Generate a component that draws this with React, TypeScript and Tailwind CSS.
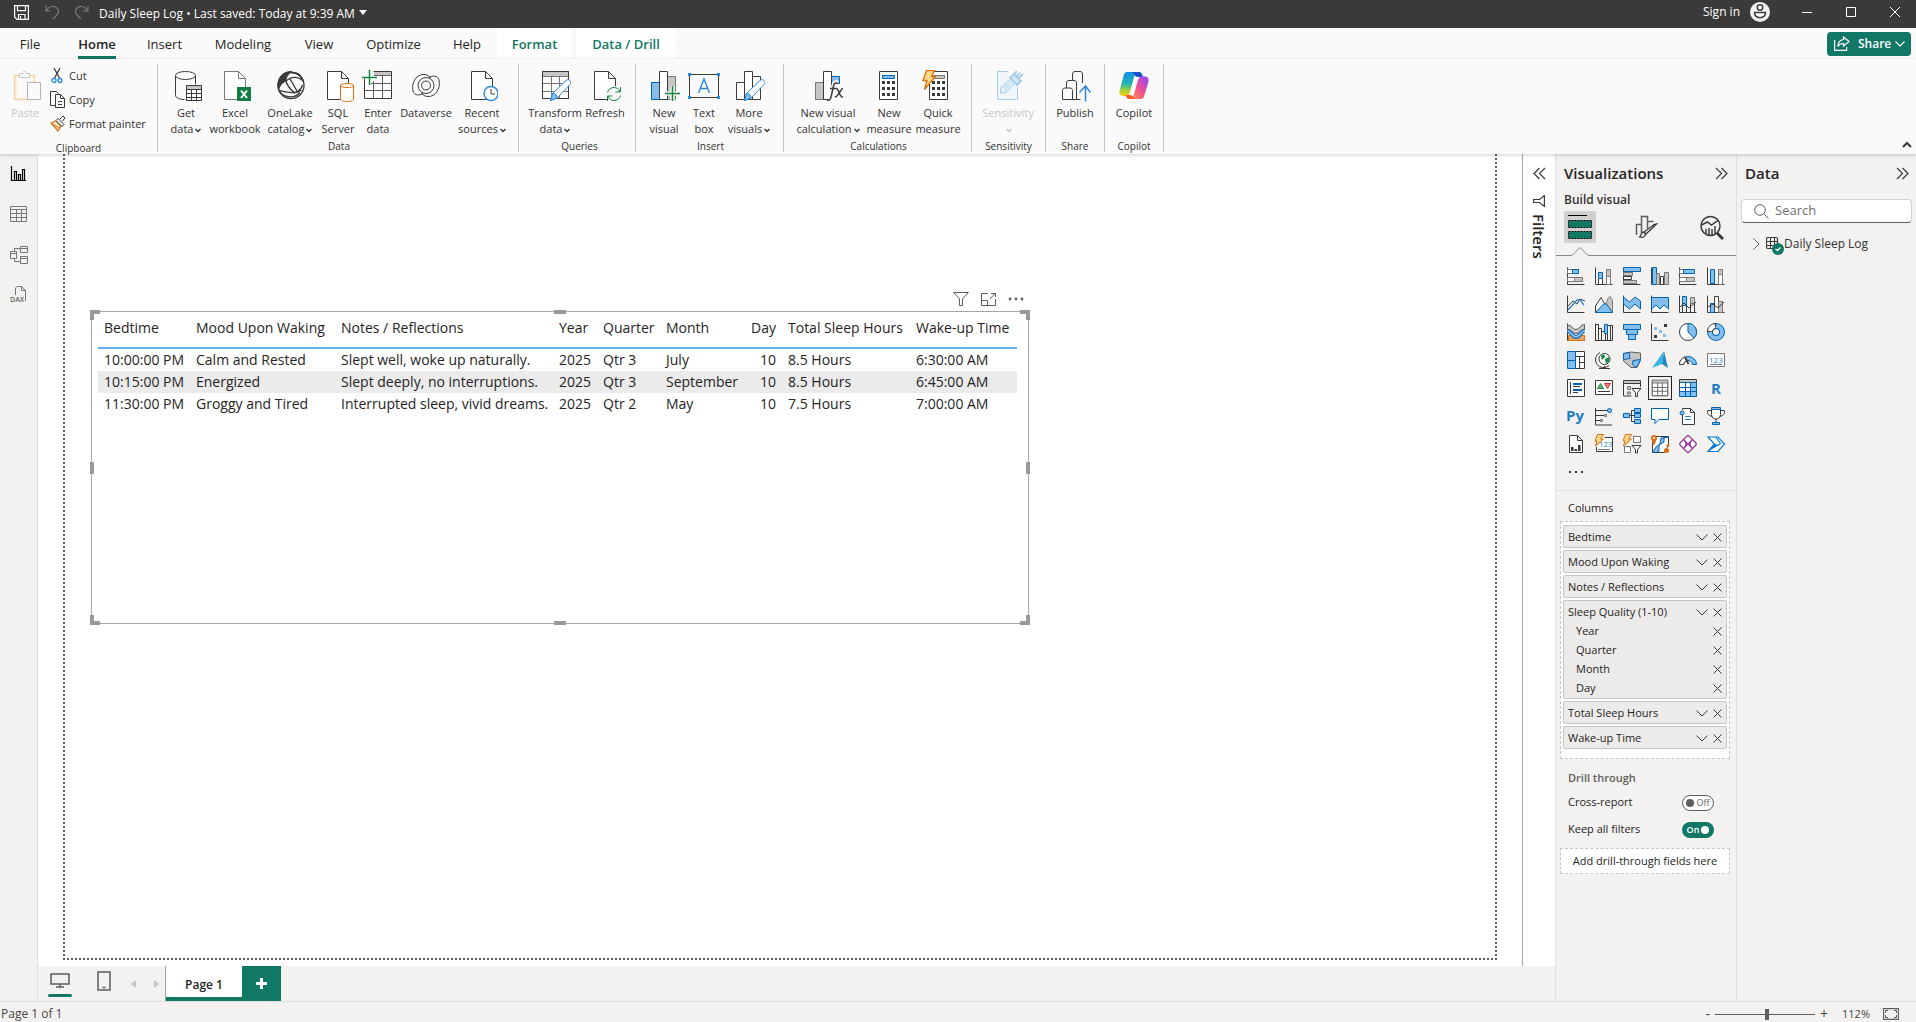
import type { ReactNode } from 'react';

const INK = '#3b3a39';
const BLUE = '#83beec';
const EDGE = '#0063b1';
const SKY = '#2b88d8';
const GRAY = '#c8c6c4';
const GREEN = '#117865';

/* ================= RIBBON ICONS ================= */

function RibbonIcon({ children }: { children: ReactNode }) {
  return (
    <svg width="32" height="32" viewBox="0 0 32 32" fill="none" stroke={INK} className="shrink-0">
      {children}
    </svg>
  );
}

function Doc({ stroke = INK }: { stroke?: string }) {
  return <path d="M5.5 1.5h14l7 7v21h-21zM19.5 1.5v7h7" fill="#fff" stroke={stroke} />;
}

function Pencil() {
  return (
    <g stroke={SKY}>
      <path d="M11.5 30.5l2-7L27 10.5c1.5-1.4 3-1 4 0s1.3 2.5 0 4L18 28z" fill="#fff" />
      <path d="M11.5 30.5l2-7c3 0 4.5 2 4.5 4.5z" fill={BLUE} />
    </g>
  );
}

function Grid() {
  return (
    <>
      <path d="M3.5 1.5h26v27h-26z" fill="#fff" />
      <path d="M4 2h25v4H4z" fill={GRAY} stroke="none" />
      <path d="M3.5 6.500h26M3.500 13.500h26M3.500 21.500h26M12.500 6.500v22M20.500 6.500v22" stroke="#797775" />
      <path d="M3.5 1.5h26v27h-26z" />
    </>
  );
}

function Calculator({ display }: { display: string }) {
  return (
    <>
      <path d="M6.5 1.5h18v28h-18z" fill="#fff" />
      <path d="M9.5 5.5h12v3h-12z" fill={display} stroke={display === BLUE ? EDGE : '#797775'} />
      {[11, 17, 23].map((y) =>
        [9, 14, 19].map((x) => <rect key={`${x}-${y}`} x={x} y={y} width="3" height="3" fill={INK} stroke="none" />),
      )}
    </>
  );
}

const ribbonIcons: Record<string, ReactNode> = {
  getData: (
    <>
      <path d="M5.5 5.5v20c0 2 4 4 9 4M25.5 5.5v9" />
      <ellipse cx="15.5" cy="5.5" rx="10" ry="4" fill="#fff" />
      <path d="M16.5 15.5h15v15h-15z" fill="#fff" />
      <path d="M17 16h14v3H17z" fill={GRAY} stroke="none" />
      <path d="M16.5 19.5h15M16.5 23.5h15M16.5 27.5h15M21.5 19.5v11M26.5 19.5v11" />
      <path d="M16.5 15.5h15v15h-15z" />
    </>
  ),
  excel: (
    <>
      <Doc stroke="#797775" />
      <path d="M18 17h14v14H18z" fill="#107c41" stroke="none" />
      <path d="M22 20.5l6 7.5M28 20.5l-6 7.5" stroke="#fff" strokeWidth="2" />
    </>
  ),
  oneLake: (
    <>
      <circle cx="17" cy="15.5" r="13" strokeWidth="1.3" />
      <path d="M18 1.5C8 1 2 9 4.5 20c2-6 5-8 7.500-9 0-4 2-7 6-9.500z" fill={INK} />
      <path d="M18 2.500c6 0 10 4 11.500 9-4-5-12-6-17.500-.5 1 5 4 8 8.500 12 3-1 7-4 8-8" strokeWidth="1.3" />
      <path d="M4.5 20c2 1 12 3 16 2.500 3 0 5-1 7-2.500M5 20.500c4 7 15 9 21 2M16 9l7 12" strokeWidth="1.3" />
    </>
  ),
  sql: (
    <>
      <Doc />
      <path d="M18.5 15v14c0 1.5 3 2.5 6.5 2.5s6.5-1 6.5-2.5V15" fill="#fff" stroke="#d8700d" />
      <ellipse cx="25" cy="15.5" rx="6.5" ry="2" fill="#fff" stroke="#d8700d" />
    </>
  ),
  enter: (
    <>
      <path d="M2.5 8.5v20h27v-27h-18" fill="#fff" />
      <path d="M12 2h17v3H12z" fill={GRAY} stroke="none" />
      <path d="M12 5.5h17.5M9 13.5h20.5M3 20.5h26.5M11.5 11v18M20.5 5.5v23" stroke="#605e5c" />
      <path d="M7.5 0v15M0 7.5h15" stroke="#10893e" strokeWidth="1.5" />
    </>
  ),
  dataverse: (
    <>
      <path d="M14 4.500C7 4 1 12 3 21c1.200 5 7 4.500 10 2.500M18 26.500C25 27 31 19 29 10c-1.200-5-7-4.500-10-2.500" />
      <path d="M14 4.500c3 0 5 1.500 7 3.500M18 26.500c-3 0-5-1.500-7-3.500" />
      <circle cx="16" cy="15.5" r="8" />
      <circle cx="16" cy="15.5" r="4.500" />
    </>
  ),
  recent: (
    <>
      <Doc />
      <circle cx="25" cy="23.5" r="7" fill="#fff" stroke={SKY} strokeWidth="1.4" />
      <path d="M25 19v5h4" />
    </>
  ),
  transform: (
    <>
      <Grid />
      <Pencil />
    </>
  ),
  refresh: (
    <>
      <Doc />
      <circle cx="25" cy="24" r="8" fill="#fafafa" stroke="none" />
      <path
        d="M18.5 22.5c1-3.5 3.5-5 6.5-5 2.500 0 5 1.500 6 4.500M31.500 17v5h-5M31.500 25.500c-1 3.500-3.500 5-6.500 5-2.500 0-5-1.500-6-4.500M18.500 31v-5h5"
        stroke="#10893e"
      />
    </>
  ),
  newVisual: (
    <>
      <path d="M3.5 12.5h8v17h-8z" fill={BLUE} stroke={EDGE} />
      <path d="M19.5 6.5h8v23h-8z" fill={GRAY} stroke="#797775" />
      <path d="M11.5 1.5h8v28h-8z" fill="#fff" />
      <path d="M24.5 16v15M17 23.5h15" stroke="#fafafa" strokeWidth="4" />
      <path d="M24.5 16v15M17 23.5h15" stroke="#10893e" strokeWidth="1.5" />
    </>
  ),
  textBox: (
    <>
      <path d="M1.5 4.5h29v23h-29z" fill="#fafafa" />
      <path d="M0 3h3v3H0zM29 3h3v3h-3zM0 26h3v3H0zM29 26h3v3h-3z" fill={SKY} stroke="none" />
      <path d="M10.5 23L16 9l5.500 14M12.500 18.500h7" stroke={SKY} strokeWidth="1.4" />
    </>
  ),
  moreVisuals: (
    <>
      <path d="M3.5 12.5h8v17h-8zM19.5 6.5h8v23h-8zM11.5 1.5h8v28h-8z" fill="#fff" />
      <Pencil />
    </>
  ),
  calculation: (
    <>
      <path d="M3.5 12.5h8v17h-8z" fill={GRAY} stroke="#797775" />
      <path d="M19.5 6.5h8v7h-8z" fill={BLUE} stroke={EDGE} />
      <path d="M11.5 1.5h8v28h-8z" fill="#fff" />
      <path d="M16 30c3 0 3.500-3 4-6l2-9c.5-2 2-2.500 4-2" stroke="#fafafa" strokeWidth="5" />
      <path
        d="M15 30c3 1 4-2 4.500-5l2-9c.5-3 2.500-3.500 4.500-2.500M18 18.500h6M24 18.500c3-1 3 9 7 8.500M31 18.500c-2 0-5 8.500-8 8.500"
        strokeWidth="1.5"
      />
    </>
  ),
  measure: <Calculator display={BLUE} />,
  quick: (
    <>
      <g transform="translate(1 0)">
        <Calculator display={GRAY} />
      </g>
      <path d="M4.5.5h8l-3 6h4l-11 13 2.500-9H1z" fill="#fbd989" stroke="#d8700d" strokeWidth="1.3" />
    </>
  ),
  sensitivity: (
    <g stroke="#a5cde8">
      <path d="M16 1.5H5.5v28h20V17" fill="#f0f6fa" />
      <path d="M8.5 18l8-8 5 5-8 8h-5zM11 18l6-5M13 20l5-5" fill="#e3f1fa" />
      <path d="M18 8l4-4 7 7-4 4zM22 4l3-3M27 8l4-4M25 6l3-3" fill="#d3e8f6" strokeWidth="2" />
    </g>
  ),
  publish: (
    <>
      <path d="M13.5 10V4c0-1.500 1-2.500 2.500-2.500h5c1.500 0 2.500 1 2.500 2.500v9" />
      <path d="M7.5 18v-5c0-1.500 1-2.500 2.500-2.500h5c1.500 0 2.500 1 2.500 2.500v16.500" />
      <path d="M3.5 20.500c0-1.500 1-2.500 2.500-2.500h5c1.500 0 2.500 1 2.500 2.500v9h-10zM13.500 29.500h8" />
      <path d="M26.5 31.500v-15M20.500 22.500l6-6.500 5 6.500" stroke={SKY} strokeWidth="1.5" />
    </>
  ),
  copilot: (
    <>
      <defs>
        <linearGradient id="cpA" x1="0" y1="0" x2="0" y2="1">
          <stop offset="0" stopColor="#0f8ee9" />
          <stop offset=".5" stopColor="#27b5b0" />
          <stop offset=".75" stopColor="#9bd13c" />
          <stop offset="1" stopColor="#ffcb0d" />
        </linearGradient>
        <linearGradient id="cpB" x1="1" y1="0" x2="0" y2="1">
          <stop offset="0" stopColor="#8c48ff" />
          <stop offset=".5" stopColor="#ee5091" />
          <stop offset="1" stopColor="#ff9b3f" />
        </linearGradient>
      </defs>
      <path d="M9 2h12c-3 0-4 2-5 5l-4 15c-1 3-2 4-4 4H5c-4 0-4-4-3-7L5.5 6C6.3 3.500 7 2 9 2z" fill="url(#cpA)" stroke="none" />
      <path d="M12 2h9c2 0 3 1.500 4 5h-5c-2 0-3-1-4-3s-2-2-4-2z" fill="#1b4fc9" stroke="none" />
      <path d="M23 29H11c3 0 4-2 5-5l4-14c1-2.500 2-3.500 4-3.500h3c4 0 4 4 3 7L26.5 25c-.8 2.500-1.500 4-3.500 4z" fill="url(#cpB)" stroke="none" />
      <path d="M20 29h-8.500c-2 0-3-1-4-4H12c2 0 2.500 1 3.500 2.500S18 29 20 29z" fill="#f4592f" stroke="none" />
    </>
  ),
};

/* ================= RIBBON ================= */

type RibbonItem = { icon: string; lines: string[]; width: string; menu?: boolean; disabled?: boolean };

const groups: { name: string; className: string; items: RibbonItem[] }[] = [
  {
    name: 'Data',
    className: 'w-[361px] pl-[6px]',
    items: [
      { icon: 'getData', lines: ['Get', 'data'], width: 'w-11', menu: true },
      { icon: 'excel', lines: ['Excel', 'workbook'], width: 'w-[54px]' },
      { icon: 'oneLake', lines: ['OneLake', 'catalog'], width: 'w-14', menu: true },
      { icon: 'sql', lines: ['SQL', 'Server'], width: 'w-10' },
      { icon: 'enter', lines: ['Enter', 'data'], width: 'w-10' },
      { icon: 'dataverse', lines: ['Dataverse'], width: 'w-14' },
      { icon: 'recent', lines: ['Recent', 'sources'], width: 'w-14', menu: true },
    ],
  },
  {
    name: 'Queries',
    className: 'w-[117px] pl-[9px]',
    items: [
      { icon: 'transform', lines: ['Transform', 'data'], width: 'w-[54px]', menu: true },
      { icon: 'refresh', lines: ['Refresh'], width: 'w-[46px]' },
    ],
  },
  {
    name: 'Insert',
    className: 'w-[148px] pl-[6px]',
    items: [
      { icon: 'newVisual', lines: ['New', 'visual'], width: 'w-11' },
      { icon: 'textBox', lines: ['Text', 'box'], width: 'w-9' },
      { icon: 'moreVisuals', lines: ['More', 'visuals'], width: 'w-[54px]', menu: true },
    ],
  },
  {
    name: 'Calculations',
    className: 'w-[188px] pl-[6px]',
    items: [
      { icon: 'calculation', lines: ['New visual', 'calculation'], width: 'w-[76px]', menu: true },
      { icon: 'measure', lines: ['New', 'measure'], width: 'w-[46px]' },
      { icon: 'quick', lines: ['Quick', 'measure'], width: 'w-[52px]' },
    ],
  },
  {
    name: 'Sensitivity',
    className: 'w-[74px] pl-1',
    items: [{ icon: 'sensitivity', lines: ['Sensitivity', ''], width: 'w-16', menu: true, disabled: true }],
  },
  {
    name: 'Share',
    className: 'w-[59px] pl-1',
    items: [{ icon: 'publish', lines: ['Publish'], width: 'w-[50px]' }],
  },
  {
    name: 'Copilot',
    className: 'w-[59px] pl-1',
    items: [{ icon: 'copilot', lines: ['Copilot'], width: 'w-[50px]' }],
  },
];

function MenuCaret() {
  return (
    <svg width="6" height="5" viewBox="0 0 6 5" fill="none" stroke="currentColor" strokeWidth="1.3" className="ml-[2px] inline-block align-middle">
      <path d="M.5 1L3 3.5 5.5 1" />
    </svg>
  );
}

function RibbonButton({ item }: { item: RibbonItem }) {
  return (
    <button
      type="button"
      disabled={item.disabled}
      className={`flex h-[68px] flex-col items-center text-[11px] leading-4 ${item.width} ${item.disabled ? 'text-[#c8c6c4]' : 'text-[#323130]'}`}
    >
      <RibbonIcon>{ribbonIcons[item.icon]}</RibbonIcon>
      <span className="mt-[3px] flex flex-col items-center whitespace-nowrap">
        {item.lines.map((line, i) => (
          <span key={i} className="block h-4">
            {line}
            {item.menu && i === item.lines.length - 1 && <MenuCaret />}
          </span>
        ))}
      </span>
    </button>
  );
}

function Ribbon() {
  return (
    <div className="relative z-10 flex h-[95px] bg-[#fafafa] pt-[5px] shadow-[0_1px_4px_rgba(0,0,0,0.2)]">
      <section className="flex h-[90px] w-[158px] flex-col">
        <div className="flex h-[76px] border-r border-[#c8c6c4]">
          <button type="button" disabled className="flex w-[50px] flex-col items-center pt-[6px] text-[11px] leading-4 text-[#c8c6c4]">
            <RibbonIcon>
              <path d="M5.5 5.5h20v24h-20z" fill="#fdf3e4" stroke="#f3d3a8" strokeWidth="1.5" />
              <path d="M8 8h15v19H8z" fill="#fafafa" stroke="none" />
              <path d="M10.5 7.5v-4h3c0-3 4-3 4 0h3v4z" fill="#fafafa" stroke="#c8c6c4" />
              <path d="M18.5 12.5h13v17h-13z" fill="#fafafa" stroke="#b5b3b1" />
            </RibbonIcon>
            <span className="mt-[3px]">Paste</span>
          </button>
          <div className="flex flex-col text-[11px] text-[#323130]">
            <button type="button" className="flex h-6 items-center pr-1 whitespace-nowrap">
              <svg width="19" height="18" viewBox="0 0 19 18" fill="none" stroke={INK} className="shrink-0">
                <path d="M4 1l5.500 10M10 1L4.500 11" strokeWidth="1.3" />
                <circle cx="4" cy="13.5" r="2" stroke={SKY} strokeWidth="1.3" />
                <circle cx="10" cy="13.5" r="2" stroke={SKY} strokeWidth="1.3" />
              </svg>
              Cut
            </button>
            <button type="button" className="flex h-6 items-center pr-1 whitespace-nowrap">
              <svg width="19" height="18" viewBox="0 0 19 18" fill="none" stroke={INK} className="shrink-0">
                <path d="M5.5 14.5h-5V.5h6l2 2M5.500 3.500h5l4 4v9h-9zM10.500 3.500v4h4M8 10.500h4M8 13.500h4" />
              </svg>
              Copy
            </button>
            <button type="button" className="flex h-6 items-center pr-1 whitespace-nowrap">
              <svg width="19" height="18" viewBox="0 0 19 18" fill="none" stroke={INK} className="shrink-0">
                <path d="M1 8l5-2 5 5-3 5z" fill="#fde7cf" stroke="#d8700d" strokeWidth="1.3" />
                <path d="M2 9l8 4" stroke="#d8700d" />
                <path d="M6 5.500l2-2 6 6-2 2zM9.500 4.500L13 1l2 2-3 3.500" fill="#fff" />
              </svg>
              Format painter
            </button>
          </div>
        </div>
        <h2 className="h-3 border-r border-[#c8c6c4] text-center text-[10px] leading-4 text-[#323130]">Clipboard</h2>
      </section>

      {groups.map((group) => (
        <section key={group.name} className={`flex h-[88px] flex-col border-r border-[#c8c6c4] ${group.className}`}>
          <div className="flex h-[76px] pt-[6px]">
            {group.items.map((item) => (
              <RibbonButton key={item.icon} item={item} />
            ))}
          </div>
          <h2 className="pr-1 text-center text-[10px] leading-4 text-[#323130]">{group.name}</h2>
        </section>
      ))}

      <button type="button" aria-label="Collapse ribbon" className="mt-auto mr-1 mb-[5px] ml-auto">
        <svg width="10" height="8" viewBox="0 0 10 8" fill="none" stroke={INK} strokeWidth="2">
          <path d="M1 6l4-4 4 4" />
        </svg>
      </button>
    </div>
  );
}

/* ================= TITLE AND TABS ================= */

function TitleBar() {
  return (
    <header className="flex h-7 items-center bg-[#3b3a39] text-xs text-white">
      <button type="button" aria-label="Save" className="ml-[14px] pb-1">
        <svg width="15" height="15" viewBox="0 0 15 15" fill="none" stroke="#fff" strokeWidth="1.2">
          <path d="M.6.6h13.800v13.800H3L.6 12zM3.500.6v5h8v-5M4.500 14V9.500h6.500V14M6.500 11v3" />
        </svg>
      </button>
      <button type="button" aria-label="Undo" className="ml-4 pb-1">
        <svg width="14" height="15" viewBox="0 0 14 15" fill="none" stroke="#7a7977" strokeWidth="1.2">
          <path d="M1 1v5h5M1 6c3-5 8-6 11-3s1 6-1 8l-3 3" />
        </svg>
      </button>
      <button type="button" aria-label="Redo" className="ml-4 pb-1">
        <svg width="14" height="15" viewBox="0 0 14 15" fill="none" stroke="#7a7977" strokeWidth="1.2">
          <path d="M13 1v5H8M13 6c-3-5-8-6-11-3s-1 6 1 8l3 3" />
        </svg>
      </button>
      <h1 className="ml-[10px]">Daily Sleep Log • Last saved: Today at 9:39 AM</h1>
      <button type="button" aria-label="File details" className="ml-1 pb-1">
        <svg width="8" height="5" viewBox="0 0 8 5" fill="#fff">
          <path d="M0 0h8L4 5z" />
        </svg>
      </button>
      <button type="button" className="ml-auto flex items-center gap-[10px] pb-1">
        Sign in
        <svg width="20" height="20" viewBox="0 0 20 20" stroke={INK} strokeWidth="1.5">
          <circle cx="10" cy="10" r="10" fill="#f3f2f1" stroke="none" />
          <circle cx="10" cy="5.5" r="2.7" fill="#fff" />
          <path d="M4.5 10.5h11c.5 7-11.500 7-11 0z" fill="#fff" />
        </svg>
      </button>
      <button type="button" aria-label="Minimize" className="ml-8 pb-1">
        <svg width="10" height="10" viewBox="0 0 10 10" stroke="#fff">
          <path d="M0 5.5h10" />
        </svg>
      </button>
      <button type="button" aria-label="Maximize" className="ml-[34px] pb-1">
        <svg width="10" height="10" viewBox="0 0 10 10" stroke="#fff" fill="none">
          <path d="M.5.5h9v9h-9z" />
        </svg>
      </button>
      <button type="button" aria-label="Close" className="mr-4 ml-[34px] pb-1">
        <svg width="10" height="10" viewBox="0 0 10 10" stroke="#fff" fill="none">
          <path d="M0 0l10 10M10 0L0 10" />
        </svg>
      </button>
    </header>
  );
}

const tabs = [
  { label: 'File', className: 'w-[60px]' },
  { label: 'Home', className: 'w-[74px] font-semibold' },
  { label: 'Insert', className: 'w-[61px]' },
  { label: 'Modeling', className: 'w-[96px]' },
  { label: 'View', className: 'w-[56px]' },
  { label: 'Optimize', className: 'w-[93px]' },
  { label: 'Help', className: 'w-[54px]' },
];

function TabRow() {
  return (
    <nav className="flex h-[31px] bg-[#fafafa] text-[13px] text-[#252423]">
      {tabs.map((tab) => (
        <button key={tab.label} type="button" className={`relative flex flex-col items-center justify-center pt-[2px] ${tab.className}`}>
          {tab.label}
          {tab.label === 'Home' && <span className="absolute bottom-0 h-[3px] w-[38px] bg-[#117865]" />}
        </button>
      ))}
      <button type="button" className="ml-[3px] w-[75px] bg-white pt-[2px] font-semibold text-[#117865]">
        Format
      </button>
      <button type="button" className="ml-1 w-[100px] bg-white pt-[2px] font-semibold text-[#117865]">
        Data / Drill
      </button>
      <button type="button" className="mt-1 mr-[5px] ml-auto flex h-6 w-[84px] items-center rounded bg-[#117865] pl-[7px] text-xs font-semibold text-white">
        <svg width="16" height="16" viewBox="0 0 16 16" fill="none" stroke="#fff" strokeWidth="1.2">
          <path d="M.6 4v10.400h12V11" />
          <path d="M9.5 1L15 5.500 9.500 10V7.500c-3 0-4.500 1-5.500 3 0-4 1.500-6.500 5.500-7z" />
        </svg>
        <span className="ml-2">Share</span>
        <svg width="10" height="6" viewBox="0 0 10 6" fill="none" stroke="#fff" strokeWidth="1.2" className="ml-1">
          <path d="M.5.5L5 5 9.500.5" />
        </svg>
      </button>
    </nav>
  );
}

/* ================= VIEW RAIL ================= */

const views = [
  {
    name: 'Report view',
    color: '#000',
    path: <path d="M1.500 0v14.500H16M4.500 14V5.500h2V14M8.500 14V8.500h2V14M12.500 14V3.500h2V14" strokeWidth="1.2" />,
  },
  {
    name: 'Table view',
    color: '#797775',
    path: <path d="M.5.5h16v15H.5zM.5 3.500h16M.5 7.500h16M.5 11.500h16M6.500 3.500v12M11.500 3.500v12" />,
  },
  {
    name: 'Model view',
    color: '#797775',
    path: <path d="M.5 5.500h6v7h-6zM.5 7.500h6M10.500.5h7v6h-7zM10.500 2.500h7M10.500 10.500h7v7h-7zM10.500 12.500h7M4.500 5.500v-3h6M4.500 12.500v3h6" />,
  },
];

function ViewRail() {
  return (
    <aside className="flex w-[38px] shrink-0 flex-col items-center gap-[22px] border-r border-[#e1dfdd] bg-[#f3f2f1] pt-3">
      {views.map((view) => (
        <button key={view.name} type="button" aria-label={view.name}>
          <svg width="18" height="18" viewBox="0 0 18 18" fill="none" stroke={view.color}>
            {view.path}
          </svg>
        </button>
      ))}
      <button type="button" aria-label="DAX query view">
        <svg width="18" height="18" viewBox="0 0 18 18" fill="none" stroke="#797775">
          <path d="M5.5 9V3c0-1.500 1-2.500 2-2.500h4l4 4V15M11.500.5v4h4" />
          <text x="0" y="16" fill="#605e5c" stroke="none" className="text-[7px] font-semibold">
            DAX
          </text>
        </svg>
      </button>
    </aside>
  );
}

/* ================= CANVAS ================= */

const columns = [
  { label: 'Bedtime', width: 'w-[92px]' },
  { label: 'Mood Upon Waking', width: 'w-[145px]' },
  { label: 'Notes / Reflections', width: 'w-[218px]' },
  { label: 'Year', width: 'w-[44px]' },
  { label: 'Quarter', width: 'w-[63px]' },
  { label: 'Month', width: 'w-[84px]' },
  { label: 'Day', width: 'w-[38px]', right: true },
  { label: 'Total Sleep Hours', width: 'w-[128px]' },
  { label: 'Wake-up Time', width: 'w-[107px]' },
];

const rows = [
  ['10:00:00 PM', 'Calm and Rested', 'Slept well, woke up naturally.', '2025', 'Qtr 3', 'July', '10', '8.5 Hours', '6:30:00 AM'],
  ['10:15:00 PM', 'Energized', 'Slept deeply, no interruptions.', '2025', 'Qtr 3', 'September', '10', '8.5 Hours', '6:45:00 AM'],
  ['11:30:00 PM', 'Groggy and Tired', 'Interrupted sleep, vivid dreams.', '2025', 'Qtr 2', 'May', '10', '7.5 Hours', '7:00:00 AM'],
];

const handles = [
  '-top-[2px] -left-[2px] h-[10px] w-[10px] border-t-4 border-l-4',
  '-top-[2px] -right-[2px] h-[10px] w-[10px] border-t-4 border-r-4',
  '-bottom-[2px] -left-[2px] h-[10px] w-[10px] border-b-4 border-l-4',
  '-right-[2px] -bottom-[2px] h-[10px] w-[10px] border-r-4 border-b-4',
  '-top-[2px] left-1/2 w-3 -translate-x-1/2 border-t-4',
  '-bottom-[2px] left-1/2 w-3 -translate-x-1/2 border-t-4',
  'top-1/2 -left-[2px] h-3 -translate-y-1/2 border-l-4',
  'top-1/2 -right-[2px] h-3 -translate-y-1/2 border-l-4',
];

function TableVisual() {
  return (
    <div className="absolute top-[157px] left-[53px] h-[313px] w-[938px] border border-[#a6a6a6] pt-[5px] pl-[6px]">
      {handles.map((handle) => (
        <span key={handle} className={`absolute border-[#999] ${handle}`} />
      ))}
      <div className="absolute -top-5 right-1 flex items-center gap-3">
        <button type="button" aria-label="Filters on this visual">
          <svg width="16" height="14" viewBox="0 0 16 14" fill="none" stroke="#605e5c">
            <path d="M.7.5h14.600L9.500 7v6.500h-3V7z" />
          </svg>
        </button>
        <button type="button" aria-label="Focus mode">
          <svg width="15" height="14" viewBox="0 0 15 14" fill="none" stroke="#605e5c">
            <path d="M7 1.500H.5v12h14V7M.5 8.500h6v5M9 7l5-5.500M10 1.500h4.500V5" />
          </svg>
        </button>
        <button type="button" aria-label="More options">
          <svg width="16" height="4" viewBox="0 0 16 4" fill="#605e5c">
            <circle cx="2" cy="2" r="1.4" />
            <circle cx="8" cy="2" r="1.4" />
            <circle cx="14" cy="2" r="1.4" />
          </svg>
        </button>
      </div>
      <table className="w-[919px] table-fixed border-collapse text-sm leading-[22px] whitespace-nowrap text-[#252423]">
        <thead>
          <tr className="border-b-2 border-[#62b0f2]">
            {columns.map((column) => (
              <th key={column.label} className={`pb-2 pl-[6px] font-normal ${column.width} ${column.right ? 'pr-[6px] text-right' : 'text-left'}`}>
                {column.label}
              </th>
            ))}
          </tr>
        </thead>
        <tbody>
          {rows.map((row) => (
            <tr key={row[0]} className="even:bg-[#ebebeb]">
              {row.map((cell, i) => (
                <td key={i} className={`p-0 ${columns[i].right ? 'pr-[6px] text-right' : 'pl-[6px]'}`}>
                  {cell}
                </td>
              ))}
            </tr>
          ))}
        </tbody>
      </table>
    </div>
  );
}

function DoubleChevron({ left }: { left?: boolean }) {
  return (
    <svg width="13" height="13" viewBox="0 0 13 13" fill="none" stroke={INK} strokeWidth="1.2" className={left ? 'rotate-180' : ''}>
      <path d="M1 1l5.500 5.500L1 12M6.500 1L12 6.500 6.500 12" />
    </svg>
  );
}

function FiltersPane() {
  return (
    <aside className="flex w-[33px] shrink-0 flex-col items-center border-l border-[#a6a6a6] bg-white pt-[13px]">
      <button type="button" aria-label="Expand filters pane">
        <DoubleChevron left />
      </button>
      <svg width="12" height="12" viewBox="0 0 12 12" fill="none" stroke={INK} strokeWidth="1.2" className="mt-[15px]">
        <path d="M11.400.6v10.800L6.500 7.500H.6v-3h5.900z" />
      </svg>
      <h2 className="mt-[7px] text-[15px] leading-5 font-semibold text-[#252423] [writing-mode:vertical-rl]">Filters</h2>
    </aside>
  );
}

function PageTabs() {
  return (
    <div className="flex h-[35px] shrink-0 bg-[#f3f2f1]">
      <button type="button" aria-label="Desktop layout" className="ml-[10px] flex w-6 flex-col items-center pt-[7px]">
        <svg width="20" height="15" viewBox="0 0 20 15" fill="none" stroke="#605e5c" strokeWidth="1.5">
          <path d="M1 1h18v10H1zM10 11v3M6 14h8" />
        </svg>
        <span className="mt-[6px] h-[3px] w-6 rounded bg-[#117865]" />
      </button>
      <button type="button" aria-label="Mobile layout" className="ml-6 flex w-4 justify-center pt-[5px]">
        <svg width="14" height="20" viewBox="0 0 14 20" fill="none" stroke="#605e5c" strokeWidth="1.5">
          <path d="M1 1h12v18H1z" />
          <path d="M5.5 16.500h3" />
        </svg>
      </button>
      <button type="button" aria-label="Previous page" className="ml-[19px]">
        <svg width="5" height="8" viewBox="0 0 5 8" fill="#c8c6c4">
          <path d="M5 0v8L0 4z" />
        </svg>
      </button>
      <button type="button" aria-label="Next page" className="ml-[18px]">
        <svg width="5" height="8" viewBox="0 0 5 8" fill="#c8c6c4">
          <path d="M0 0v8l5-4z" />
        </svg>
      </button>
      <button
        type="button"
        className="ml-[7px] w-[76px] border-b-4 border-b-[#117865] bg-white pt-[6px] text-xs font-semibold text-[#252423] shadow-[-1px_0_0_#a6a6a6]"
      >
        Page 1
      </button>
      <button type="button" aria-label="New page" className="flex w-[39px] items-center justify-center bg-[#117865]">
        <svg width="11" height="11" viewBox="0 0 11 11" stroke="#fff" strokeWidth="3">
          <path d="M5.5 0v11M0 5.500h11" />
        </svg>
      </button>
    </div>
  );
}

/* ================= VISUALIZATIONS ================= */

const axis = <path d="M.5.5v17h17" stroke={INK} />;
const bolt = <path d="M2.500-.5h6l-3 4.500h3L.5 11 2 6H0z" fill="#fbd989" stroke="#d8700d" />;

const visuals: { name: string; art: ReactNode }[] = [
  { name: 'Stacked bar chart', art: <>{axis}<path d="M.5 2.500h5v4h-5zM.5 10.500h7v4h-7z" fill="#fff" stroke="#797775" /><path d="M5.500 2.500h6v4h-6z" fill={BLUE} stroke={EDGE} /><path d="M7.500 10.500h8v4h-8z" fill={GRAY} stroke="#797775" /></> },
  { name: 'Stacked column chart', art: <>{axis}<path d="M3.500 11.500h4v6h-4z" fill="#fff" stroke={INK} /><path d="M3.500 5.500h4v6h-4z" fill={BLUE} stroke={EDGE} /><path d="M11.500 2.500h4v7h-4z" fill={GRAY} stroke="#797775" /><path d="M11.500 9.500h4v8h-4z" fill="#fff" stroke="#797775" /></> },
  { name: 'Clustered bar chart', art: <>{axis}<path d="M.5.5h17v4H.5z" fill={BLUE} stroke={EDGE} /><path d="M.5 5.500h9v3h-9zM.5 13.500h13v3H.5z" fill={GRAY} stroke="#797775" /><path d="M.5 9.500h8v3h-8z" fill="#fff" stroke={INK} /></> },
  { name: 'Clustered column chart', art: <>{axis}<path d="M1.500.5h4v17h-4z" fill={BLUE} stroke={EDGE} /><path d="M5.500 6.500h3v11h-3z" fill={GRAY} stroke="#797775" /><path d="M9.500 9.500h3v8h-3z" fill="#fff" stroke={INK} /><path d="M13.500 5.500h4v12h-4z" fill={GRAY} stroke="#797775" /></> },
  { name: '100% stacked bar chart', art: <>{axis}<path d="M.5 2.500h4v4h-4zM.5 10.500h7v4h-7z" fill="#fff" stroke="#797775" /><path d="M4.500 2.500h11v4h-11z" fill={BLUE} stroke={EDGE} /><path d="M7.500 10.500h8v4h-8z" fill={GRAY} stroke="#797775" /></> },
  { name: '100% stacked column chart', art: <>{axis}<path d="M3.500 16.500h4v1h-4z" fill="#fff" stroke={INK} /><path d="M3.500 2.500h4v14h-4z" fill={BLUE} stroke={EDGE} /><path d="M11.500 2.500h4v5h-4z" fill={GRAY} stroke="#797775" /><path d="M11.500 7.500h4v10h-4z" fill="#fff" stroke="#797775" /></> },
  { name: 'Line chart', art: <>{axis}<path d="M1 11l5-5 4 3 3-5 5 2" stroke={INK} /><path d="M1 15l9-10h3l4 5" stroke={SKY} strokeWidth="1.3" /></> },
  { name: 'Area chart', art: <><path d="M7 17.500l6-14 2-2 2.500 4v12z" fill={GRAY} stroke="#797775" /><path d="M.5 17.500V11L6 2.500l8.500 15z" fill="#fff" stroke={INK} /><path d="M.5 17.500l8-8.500h3l6 8.500z" fill={BLUE} stroke={EDGE} /></> },
  { name: 'Stacked area chart', art: <>{axis}<path d="M.5 2l6 5 5.500-5 5.500 4v8l-5.500-5-5.500 5-6-5z" fill={BLUE} stroke={EDGE} /></> },
  { name: '100% stacked area chart', art: <>{axis}<path d="M.5 2.500h17V14l-4.500-4-4 4-4-4-4.500 4z" fill={BLUE} stroke={EDGE} /></> },
  { name: 'Line and stacked column chart', art: <>{axis}<path d="M3.500 1.500h4v9h-4z" fill={BLUE} stroke={EDGE} /><path d="M11.500 2.500h4v6h-4z" fill={GRAY} stroke="#797775" /><path d="M3.500 10.500v7M7.500 10.500v7M11.500 8.500v9M15.500 8.500v9M1 12l4-4 5 5 7-6" stroke={INK} /></> },
  { name: 'Line and clustered column chart', art: <>{axis}<path d="M3.500 8.500h4v9h-4z" fill={BLUE} stroke={EDGE} /><path d="M7.500 1.500h4v16h-4z" fill="#fff" stroke={INK} /><path d="M11.500 6.500h4v11h-4z" fill={GRAY} stroke="#797775" /><path d="M1 12l5-3 5 4 6-6" stroke={INK} /></> },
  { name: 'Ribbon chart', art: <>{axis}<path d="M1.500 12.500h5l2 2 2-2h7v5h-16z" fill="#f2a45c" stroke="#d8700d" /><path d="M.5 2.500c4-1 5 4 8.500 4s4.500-5 8.500-5v5c-4 0-4 4-8.500 4s-4.500-4-8.500-4z" fill={GRAY} stroke="#605e5c" /><path d="M.5 8c4 0 4 6 8.500 6s4.500-6 8.500-6" stroke={EDGE} strokeWidth="4" /><path d="M.5 8c4 0 4 6 8.500 6s4.500-6 8.500-6" stroke={BLUE} strokeWidth="2" /></> },
  { name: 'Waterfall chart', art: <>{axis}<path d="M.5 1.500h3v16h-3zM3.500 5.500h3v12M6.500 8.500h4v9M12.500 3.500v14M12.500 2.500h5v15M15.500 2.500v15" stroke={INK} /><path d="M9.500 1.500h3v9h-3z" fill={BLUE} stroke={EDGE} /></> },
  { name: 'Funnel chart', art: <path d="M.5 1.500h17v5H.5zM3.500 6.500h11v5h-11zM5.500 11.500h7v5h-7z" fill={BLUE} stroke={EDGE} /> },
  { name: 'Scatter chart', art: <>{axis}<path d="M3 4h3v3H3zM8 7h3v3H8zM12 11h3v3h-3z" fill={BLUE} stroke="none" /><path d="M13 1h3v3h-3zM3 12h3v3H3z" fill={INK} stroke="none" /></> },
  { name: 'Pie chart', art: <><circle cx="9" cy="9" r="8.5" fill="#fff" stroke={INK} /><path d="M9 .5a8.500 8.500 0 0 1 6 14.500L9 9z" fill={BLUE} stroke={EDGE} /></> },
  { name: 'Donut chart', art: <><circle cx="9" cy="9" r="6" stroke={EDGE} strokeWidth="6" /><circle cx="9" cy="9" r="6" stroke={BLUE} strokeWidth="4" /><path d="M3 9a6 6 0 0 1 6-6" stroke={INK} strokeWidth="6" /><path d="M3 8a6 6 0 0 1 5-5" stroke="#fff" strokeWidth="4" /></> },
  { name: 'Treemap', art: <><path d="M8.500.5h9v17h-9z" fill="#fff" stroke={INK} /><path d="M8.500 5.500h9M12.500 5.500v12M12.500 11.500h5" stroke={INK} /><path d="M.5.5h8v9h-8zM.5 9.500h8v8h-8z" fill={BLUE} stroke={EDGE} /></> },
  { name: 'Map', art: <><circle cx="9.5" cy="8" r="5.5" fill="#fff" stroke={INK} /><path d="M6 5l3-2 1 3-3 3zM10 8l4-2v4l-3 3z" fill="#10893e" stroke="none" /><path d="M5 1.500a8 8 0 1 0 9 13M9.500 15v2.500M4 17.500h11" stroke={INK} /></> },
  { name: 'Filled map', art: <><path d="M.5 2.500L8 1l9.500 1v7L14 16.500H8L.5 10z" fill={GRAY} stroke="#605e5c" /><path d="M.5 2.500L6 1.500l1 6-6.500 1zM10 9.500l7.500-1-2 4.500-3 3.500-3-3z" fill={BLUE} stroke={EDGE} /></> },
  { name: 'Azure map', art: <><path d="M13 0l4 17-6-4z" fill="#1f87c4" stroke="none" /><path d="M13 0L1 17l10-4z" fill="#3bb3e0" stroke="none" /></> },
  { name: 'Gauge', art: <><path d="M.5 13.500a8.500 8 0 0 1 17 0h-4a4.500 4 0 0 0-9 0z" fill={BLUE} stroke={EDGE} /><path d="M.5 13.500A8.500 8 0 0 1 6 6l1.500 4a4.500 4 0 0 0-3 3.500z" fill="#fff" stroke={INK} /><path d="M9.500 13l-3-6" stroke={INK} strokeWidth="1.8" /></> },
  { name: 'Card', art: <><path d="M.5 2.500h17v13H.5z" fill="#fff" stroke="#797775" /><path d="M3 13.500h12" stroke="#797775" /><text x="2" y="11.500" fill={SKY} stroke="none" className="text-[8px]">123</text></> },
  { name: 'Multi-row card', art: <><path d="M.5.5h17v17H.5z" fill="#fff" stroke={INK} /><path d="M3.500 3v12M6 7.500h7M6 13.500h5" stroke={INK} /><path d="M6 5h9M6 11h9" stroke={EDGE} strokeWidth="2" /></> },
  { name: 'KPI', art: <><path d="M.5 1.500h17v14H.5z" fill="#fff" stroke={INK} /><path d="M2.500 9.500l3-5 3 5z" fill="#6bb26b" stroke="#10893e" /><path d="M9.500 4.500h6l-3 5z" fill="#f08080" stroke="#d13438" /><path d="M3 12.500h12" stroke={INK} /></> },
  { name: 'Slicer', art: <><path d="M.5 17V1.500h17V8M.5 4.500h17M.5 17h8" stroke={INK} /><path d="M1 2h16v2H1z" fill={GRAY} stroke="none" /><path d="M4.500 7.500h3v3h-3zM4.500 13h3v2h-3z" fill={GRAY} stroke="#797775" /><path d="M9 9.500h9l-3.500 4v4h-2v-4z" fill="#fff" stroke={INK} /></> },
  { name: 'Table', art: <><path d="M.5.5h17v17H.5z" fill="#fff" stroke={INK} /><path d="M1 1h16v2H1z" fill={GRAY} stroke="none" /><path d="M.5 3.500h17M.5 8.500h17M.5 12.500h17M6.500 3.500v14M11.500 3.500v14" stroke="#605e5c" /></> },
  { name: 'Matrix', art: <><path d="M.5.5h17v17H.5z" fill="#fff" stroke={INK} /><path d="M1 1h16v2H1z" fill={GRAY} stroke="none" /><path d="M11.500 3.500h6v14h-17v-5h11z" fill={BLUE} stroke={EDGE} /><path d="M.5 3.500h17M.5 8.500h17M.5 12.500h17M6.500 3.500v14M11.500 3.500v14" stroke={EDGE} /></> },
  { name: 'R script visual', art: <text x="4" y="15" fill="#1f7fc4" stroke="none" className="text-[15px] font-bold">R</text> },
  { name: 'Python visual', art: <text x="-1" y="14" fill="#1f7fc4" stroke="none" className="text-[15px] font-bold">Py</text> },
  { name: 'Key influencers', art: <><path d="M.5 1v17H17" stroke={INK} /><path d="M1 3.500h12M1 8.500h8M1 13.500h4" stroke={INK} /><circle cx="14.5" cy="3.5" r="2" fill={BLUE} stroke={EDGE} /><path d="M9.500 7.500h2v2h-2zM5.500 12.500h2v2h-2z" fill={GRAY} stroke="#797775" /></> },
  { name: 'Decomposition tree', art: <><path d="M6 8.500h5M11.500 3.500h-3v11h3" stroke={INK} /><path d="M.5 6.500h6v4h-6zM11.500 1.500h6v4h-6zM11.500 6.500h6v4h-6zM11.500 12.500h6v4h-6z" fill={BLUE} stroke={EDGE} /></> },
  { name: 'Q&A', art: <path d="M.5 1.500h17v11H8l-4 4v-4H.5z" fill="#fff" stroke={EDGE} /> },
  { name: 'Narrative', art: <><path d="M3.500 8v9.500h12v-12l-4-4h-8V3M11.500 1.500v4h4" fill="#fff" stroke={INK} /><path d="M6 9.500h6M6 12.500h6" stroke={SKY} /><circle cx="3" cy="6" r="2" fill={BLUE} stroke={EDGE} /></> },
  { name: 'Goals', art: <><path d="M4.500 1.500h9v6c0 6-9 6-9 0zM4.500 3.500h-4c0 4 1 5 5 6M13.500 3.500h4c0 4-1 5-5 6M9 12v3" fill="#fff" stroke={INK} /><path d="M4.500.5h9v2h-9zM5.500 15.500h7v2h-7z" fill={BLUE} stroke={EDGE} /></> },
  { name: 'Paginated report', art: <><path d="M2.500.5h8l5 5v12h-13zM10.500.5v5h5" fill="#fff" stroke={INK} /><path d="M4 12h2.500v4H4zM7.500 14H10v2H7.500zM11 10h2.500v6H11z" fill={INK} stroke="none" /></> },
  { name: 'New card', art: <><path d="M1.500 12v4.500h16v-14h-8" fill="#fff" stroke={INK} /><text x="4" y="11.500" fill={SKY} stroke="none" className="text-[8px]">123</text><path d="M3 14.500h12" stroke="#797775" />{bolt}</> },
  { name: 'New slicer', art: <><path d="M10.500 1.500h7v6h-7zM1.500 11.500h6v6h-6z" fill="#fff" stroke="#797775" /><path d="M9 10.500h9l-3.500 4v3.500h-2v-3.500z" fill="#fff" stroke={INK} />{bolt}</> },
  { name: 'ArcGIS map', art: <><path d="M2.500 1.500h15v8l-4 8h-12v-8z" fill="#fff" stroke={INK} /><path d="M17 2l-4 1v4l-5 3v6l-3 1.500h-3l3-5.500 4-3 1-6z" fill={BLUE} stroke={EDGE} /><circle cx="3" cy="3" r="3" fill="#d8700d" stroke="none" /><path d="M.5 4.500L3 11l2.500-6.500z" fill="#d8700d" stroke="none" /><circle cx="3" cy="3" r="1" fill="#fff" stroke="none" /><circle cx="15.5" cy="15.5" r="2.500" fill="#d8700d" stroke="none" /><circle cx="17" cy="10.5" r="1.5" fill="#d8700d" stroke="none" /></> },
  { name: 'Power Apps', art: <><path d="M7.500 1.500L1.500 7.500q-1.500 1.500 0 3l6 6q1.500 1.500 3 0l6-6q1.500-1.500 0-3l-6-6q-1.500-1.500-3 0z" fill="#fff" stroke="#93378f" strokeWidth="1.2" /><path d="M4.500 4.500l9 9M13.500 4.500l-9 9M9 9L6 6M5 5q4 4 0 8M13 5q-4 4 0 8" stroke="#93378f" strokeWidth="1.2" /></> },
  { name: 'Power Automate', art: <path d="M1 2h10l6.500 7-6.500 7.500H1L7.500 9zM9 2.500l5 6.500M13 9L3 14.500M9.500 9l-5 5" fill="#fff" stroke="#0078d4" strokeWidth="1.2" /> },
];

const wells = [
  { label: 'Bedtime' },
  { label: 'Mood Upon Waking' },
  { label: 'Notes / Reflections' },
  { label: 'Sleep Quality (1-10)', parts: ['Year', 'Quarter', 'Month', 'Day'] },
  { label: 'Total Sleep Hours' },
  { label: 'Wake-up Time' },
];

function RemoveButton({ name }: { name: string }) {
  return (
    <button type="button" aria-label={`Remove ${name}`}>
      <svg width="9" height="9" viewBox="0 0 9 9" stroke={INK}>
        <path d="M.5.5l8 8M8.500.5l-8 8" />
      </svg>
    </button>
  );
}

function FieldWell() {
  return (
    <ul className="mr-[6px] ml-1 flex flex-col gap-[2px] border border-dashed border-[#c8c6c4] bg-white px-[2px] pt-[3px] pb-[9px]">
      {wells.map((field) => (
        <li key={field.label} className="rounded-xs border border-[#c8c6c4] bg-[#edebe9] px-1">
          <div className="flex h-[21px] items-center pt-px">
            <span className="flex-1 whitespace-nowrap">{field.label}</span>
            <button type="button" aria-label={`${field.label} options`} className="mr-[5px]">
              <svg width="12" height="7" viewBox="0 0 12 7" fill="none" stroke={INK}>
                <path d="M.5.5L6 6 11.500.5" />
              </svg>
            </button>
            <RemoveButton name={field.label} />
          </div>
          {field.parts?.map((part) => (
            <div key={part} className="flex h-[19px] items-center justify-between pl-2">
              {part}
              <RemoveButton name={part} />
            </div>
          ))}
        </li>
      ))}
    </ul>
  );
}

function Toggle({ label, on }: { label: string; on?: boolean }) {
  return (
    <label className="flex h-[27px] items-center justify-between pr-[22px] pl-3">
      {label}
      <input type="checkbox" defaultChecked={on} className="peer sr-only" />
      {on ? (
        <span className="flex h-4 w-8 items-center justify-center gap-[2px] rounded-full bg-[#117865] text-[9px] font-semibold text-white">
          On
          <span className="size-2 rounded-full bg-white" />
        </span>
      ) : (
        <span className="flex h-4 w-8 items-center justify-center gap-[2px] rounded-full border border-[#605e5c] bg-white text-[9px] text-[#605e5c]">
          <span className="size-2 rounded-full bg-[#605e5c]" />
          Off
        </span>
      )}
    </label>
  );
}

function VisualizationsPane() {
  return (
    <aside className="flex w-[181px] shrink-0 flex-col border-l border-[#e1dfdd] bg-[#f3f2f1] text-[11px] text-[#252423]">
      <div className="flex items-center justify-between pt-[7px] pr-2 pl-2">
        <h2 className="text-[15px] leading-6 font-semibold">Visualizations</h2>
        <button type="button" aria-label="Collapse visualizations pane">
          <DoubleChevron />
        </button>
      </div>
      <h3 className="mt-[5px] pl-2 text-xs leading-5 font-semibold text-[#323130]">Build visual</h3>
      <div className="mt-px flex items-center justify-between pr-3 pl-2">
        <button type="button" aria-label="Build visual" className="flex size-8 items-center justify-center rounded-xs bg-[#d2d0ce]">
          <svg width="24" height="25" viewBox="0 0 24 25" fill={GREEN} stroke="#000">
            <path d="M0 .5h19" />
            <path d="M.5 5.500h23v7H.5zM.5 16.500h23v7H.5z" strokeDasharray="2 1" />
          </svg>
        </button>
        <button type="button" aria-label="Format visual" className="mr-[3px]">
          <svg width="23" height="24" viewBox="0 0 23 24" fill="none" stroke="#605e5c" strokeWidth="1.5">
            <path d="M1.500 20V9.500h5M6.500 18V1.500h6v12M12.500 6.500h6" />
            <path d="M21.500 9L11 19l-2-2L19 9.500zM8.500 17c-3 0-2 4-4 5 3 1 6 0 6-3z" stroke={INK} strokeWidth="1.3" />
          </svg>
        </button>
        <button type="button" aria-label="Analytics">
          <svg width="24" height="25" viewBox="0 0 24 25" fill="none" stroke={INK} strokeWidth="1.5">
            <circle cx="10.5" cy="11" r="9.5" />
            <path d="M1.500 10l6-3 4 3 7-5M6 19v-5M9 20v-7M12 20v-6M15 19v-8" />
            <path d="M17 18l6 6" strokeWidth="3" />
          </svg>
        </button>
      </div>
      <svg height="10" viewBox="0 0 180 10" fill="none" stroke="#8a8886" className="mt-1 w-full">
        <path d="M0 8.500h16l8-8 8 8h148" />
      </svg>
      <div className="mt-[5px] grid grid-cols-6 pr-[6px] pl-[6px]">
        {visuals.map((visual) => (
          <button key={visual.name} type="button" aria-label={visual.name} className="flex h-7 w-7 items-center justify-center">
            <svg
              width="24"
              height="24"
              viewBox="-3 -3 24 24"
              fill="none"
              className={visual.name === 'Table' ? 'border border-[#252423]' : ''}
            >
              {visual.art}
            </svg>
          </button>
        ))}
      </div>
      <button type="button" aria-label="Get more visuals" className="mt-2 ml-3 h-3 self-start">
        <svg width="16" height="3" viewBox="0 0 16 3" fill={INK}>
          <path d="M1 0h2v2H1zM7 0h2v2H7zM13 0h2v2h-2z" />
        </svg>
      </button>
      <div className="mt-3 border-t border-[#e1dfdd] pt-2">
        <h3 className="mb-1 pl-3 leading-[18px]">Columns</h3>
        <FieldWell />
        <h3 className="mt-[9px] pl-3 leading-5 font-semibold text-[#605e5c]">Drill through</h3>
        <div className="pt-px">
          <Toggle label="Cross-report" />
          <Toggle label="Keep all filters" on />
        </div>
        <div className="mt-[5px] mr-[6px] ml-1 flex h-[26px] items-center justify-center border border-dashed border-[#c8c6c4] bg-white whitespace-nowrap">
          Add drill-through fields here
        </div>
      </div>
    </aside>
  );
}

/* ================= DATA ================= */

function DataPane() {
  return (
    <aside className="w-[180px] shrink-0 border-l border-[#e1dfdd] bg-[#f3f2f1] text-[#252423]">
      <div className="flex items-center justify-between pt-[7px] pr-[7px] pl-2">
        <h2 className="text-[15px] leading-6 font-semibold">Data</h2>
        <button type="button" aria-label="Collapse data pane">
          <DoubleChevron />
        </button>
      </div>
      <label className="mx-1 mt-[14px] flex h-6 items-center rounded border border-[#d1d1d1] border-b-[#616161] bg-white pl-3">
        <svg width="15" height="15" viewBox="0 0 15 15" fill="none" stroke="#605e5c" className="shrink-0">
          <circle cx="6" cy="6" r="5.3" />
          <path d="M10 10l4.500 4.500" />
        </svg>
        <input
          type="search"
          aria-label="Search"
          placeholder="Search"
          className="ml-[6px] w-full min-w-0 bg-transparent text-[13px] outline-none placeholder:text-[#707070]"
        />
      </label>
      <button type="button" className="mt-[9px] ml-4 flex h-6 items-center text-xs whitespace-nowrap text-[#323130]">
        <svg width="7" height="12" viewBox="0 0 7 12" fill="none" stroke="#605e5c">
          <path d="M.5.5L6 6 .5 11.500" />
        </svg>
        <svg width="18" height="20" viewBox="0 0 18 20" fill="none" stroke={INK} className="mt-1 ml-[6px]">
          <rect x=".5" y="1.5" width="11" height="11" rx="1.5" strokeWidth="1.2" />
          <path d="M.5 5.500h11M.5 9.500h11M4.500 1.500v11M8.500 1.500v11" />
          <circle cx="12" cy="13" r="6" fill={GREEN} stroke="none" />
          <path d="M9.500 13l2 1.500 3-3" stroke="#fff" strokeWidth="1.5" />
        </svg>
        Daily Sleep Log
      </button>
    </aside>
  );
}

function StatusBar() {
  return (
    <footer className="flex h-[21px] shrink-0 items-center border-t border-[#e1dfdd] bg-[#f3f2f1] pt-1 pr-[17px] pl-px text-[11px] text-[#484644]">
      <span className="text-xs">Page 1 of 1</span>
      <button type="button" className="ml-auto text-sm leading-4">-</button>
      <input
        type="range"
        min="0"
        max="100"
        defaultValue="52"
        aria-label="Zoom"
        className="mx-[5px] h-3 w-[100px] appearance-none bg-[linear-gradient(#605e5c,#605e5c)] bg-[length:100%_1px] bg-center bg-no-repeat [&::-webkit-slider-thumb]:h-[11px] [&::-webkit-slider-thumb]:w-1 [&::-webkit-slider-thumb]:appearance-none [&::-webkit-slider-thumb]:bg-[#605e5c]"
      />
      <button type="button" className="text-sm leading-4">+</button>
      <span className="ml-[14px]">112%</span>
      <button type="button" aria-label="Fit to page" className="ml-[13px]">
        <svg width="16" height="12" viewBox="0 0 16 12" fill="none" stroke="#605e5c">
          <path d="M.5.5h15v11H.5z" strokeWidth="1.3" />
          <path d="M5 2.500H2.500V5M5 9.500H2.500V7M11 2.500h2.500V5M11 9.500h2.500V7" />
        </svg>
      </button>
    </footer>
  );
}

export default function App() {
  return (
    <div className="flex h-screen flex-col overflow-hidden bg-white font-['Open_Sans','Noto_Sans',sans-serif]">
      <TitleBar />
      <TabRow />
      <Ribbon />
      <main className="flex min-h-0 flex-1">
        <ViewRail />
        <div className="flex min-w-0 flex-1 flex-col">
          <div className="flex min-h-0 flex-1">
            <div className="relative flex min-w-0 flex-1 pr-[25px] pb-[6px] pl-[25px]">
              <div className="flex-1 border-2 border-t-0 border-dotted border-[#605e5c]" />
              <TableVisual />
            </div>
            <FiltersPane />
          </div>
          <PageTabs />
        </div>
        <VisualizationsPane />
        <DataPane />
      </main>
      <StatusBar />
    </div>
  );
}
